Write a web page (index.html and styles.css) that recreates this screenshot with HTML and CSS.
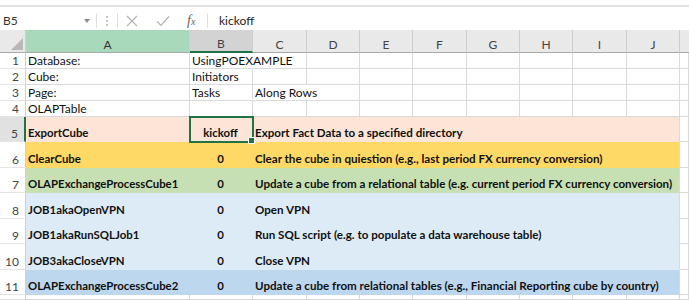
FILE: index.html
```html
<!DOCTYPE html>
<html>
<head>
<meta charset="utf-8">
<link rel="stylesheet" href="styles.css">
</head>
<body>
<div class="fbar">
  <div class="namebox"><span class="ref">B5</span><svg class="dd" width="6" height="4" viewBox="0 0 6 4"><path d="M0 0H6L3 4Z" fill="#8a8a8a"/></svg></div>
  <div class="sep"><i></i><i></i><i></i></div>
  <div class="icons">
    <svg class="ic-x" width="12" height="12" viewBox="0 0 12 12"><path d="M1 1L11 11M11 1L1 11" stroke="#b4b4b4" stroke-width="1.2" fill="none"/></svg>
    <svg class="ic-ok" width="14" height="12" viewBox="0 0 14 12"><path d="M1 6.5L5 10.5L13 1.5" stroke="#b4b4b4" stroke-width="1.2" fill="none"/></svg>
    <span class="fx">f<small>x</small></span>
  </div>
  <div class="formula">kickoff</div>
</div>
<div class="sheet">
  <div class="h corner"><svg width="12" height="12" viewBox="0 0 12 12"><path d="M12 0V12H0Z" fill="#b8b8b8"/></svg></div>
  <div class="h hA">A</div>
  <div class="h hB">B</div>
  <div class="h">C</div>
  <div class="h">D</div>
  <div class="h">E</div>
  <div class="h">F</div>
  <div class="h">G</div>
  <div class="h">H</div>
  <div class="h">I</div>
  <div class="h">J</div>
  <div class="h hx"></div>

  <div class="rn">1</div>
  <div class="c">Database:</div>
  <div class="c span2">UsingPOEXAMPLE</div>
  <div class="c"></div><div class="c"></div><div class="c"></div><div class="c"></div><div class="c"></div><div class="c"></div><div class="c"></div><div class="c"></div>

  <div class="rn">2</div>
  <div class="c">Cube:</div>
  <div class="c">Initiators</div>
  <div class="c"></div><div class="c"></div><div class="c"></div><div class="c"></div><div class="c"></div><div class="c"></div><div class="c"></div><div class="c"></div><div class="c"></div>

  <div class="rn">3</div>
  <div class="c">Page:</div>
  <div class="c">Tasks</div>
  <div class="c span2">Along Rows</div>
  <div class="c"></div><div class="c"></div><div class="c"></div><div class="c"></div><div class="c"></div><div class="c"></div><div class="c"></div>

  <div class="rn">4</div>
  <div class="c">OLAPTable</div>
  <div class="c"></div>
  <div class="c"></div><div class="c"></div><div class="c"></div><div class="c"></div><div class="c"></div><div class="c"></div><div class="c"></div><div class="c"></div><div class="c"></div>

  <div class="rn rn-sel">5</div>
  <div class="c b pink">ExportCube</div>
  <div class="c b pink num sel">kickoff</div>
  <div class="c b pink desc">Export Fact Data to a specified directory</div>
  <div class="c"></div>

  <div class="rn">6</div>
  <div class="c b yellow">ClearCube</div>
  <div class="c b yellow num">0</div>
  <div class="c b yellow desc">Clear the cube in quiestion (e.g., last period FX currency conversion)</div>
  <div class="c"></div>

  <div class="rn">7</div>
  <div class="c b green">OLAPExchangeProcessCube1</div>
  <div class="c b green num">0</div>
  <div class="c b green desc">Update a cube from a relational table (e.g. current period FX currency conversion)</div>
  <div class="c"></div>

  <div class="rn">8</div>
  <div class="c b blue">JOB1akaOpenVPN</div>
  <div class="c b blue num">0</div>
  <div class="c b blue desc">Open VPN</div>
  <div class="c"></div>

  <div class="rn">9</div>
  <div class="c b blue">JOB1akaRunSQLJob1</div>
  <div class="c b blue num">0</div>
  <div class="c b blue desc">Run SQL script (e.g. to populate a data warehouse table)</div>
  <div class="c"></div>

  <div class="rn">10</div>
  <div class="c b blue">JOB3akaCloseVPN</div>
  <div class="c b blue num">0</div>
  <div class="c b blue desc">Close VPN</div>
  <div class="c"></div>

  <div class="rn">11</div>
  <div class="c b blue2">OLAPExchangeProcessCube2</div>
  <div class="c b blue2 num">0</div>
  <div class="c b blue2 desc">Update a cube from relational tables (e.g., Financial Reporting cube by country)</div>
  <div class="c"></div>

  <div class="rn"></div>
  <div class="c"></div><div class="c"></div><div class="c"></div><div class="c"></div><div class="c"></div><div class="c"></div><div class="c"></div><div class="c"></div><div class="c"></div><div class="c"></div><div class="c"></div>
</div>
</body>
</html>
```

FILE: styles.css
```css
* { box-sizing: border-box; }
html, body { margin: 0; padding: 0; }
body {
  width: 689px;
  height: 300px;
  overflow: hidden;
  background: #fff;
  font-family: Lato, "Liberation Sans", sans-serif;
  color: #111;
}

.fbar {
  height: 30px;
  display: flex;
  align-items: stretch;
  padding-top: 8px;
  padding-bottom: 2px;
  border-top: 5px solid #fff;
  background: #fff;
  box-shadow: inset 0 2px 0 #e2e2e2;
}
.namebox {
  width: 97px;
  border-right: 1px solid #e0e0e0;
  display: flex;
  align-items: center;
  justify-content: space-between;
  padding: 0 6px 0 3px;
  font-size: 12px;
  color: #333;
}
.sep {
  width: 20px;
  display: flex;
  flex-direction: column;
  align-items: center;
  justify-content: center;
  gap: 2px;
}
.sep i { width: 2px; height: 2px; background: #c4c4c4; display: block; }
.icons {
  width: 91px;
  border-left: 1px solid #e0e0e0;
  border-right: 1px solid #e0e0e0;
  display: flex;
  align-items: center;
  padding: 0 0 0 8px;
}
.ic-ok { margin-left: 18px; }
.fx {
  margin-left: 17px;
  font-family: "Liberation Serif", serif;
  font-style: italic;
  font-size: 14px;
  color: #666;
}
.fx small { font-size: 10px; }
.formula {
  flex: 1;
  display: flex;
  align-items: center;
  padding-left: 11px;
  font-size: 12px;
  color: #222;
}

.sheet {
  height: 270px;
  display: grid;
  grid-template-columns: 26px 164px 63px 54px 53px 53px 54px 53px 53px 54px 53px 1fr;
  grid-template-rows: 23px repeat(4, 16px) 25px 26px 25px 26px 25px 26px 25px 1fr;
  font-size: 12px;
}
.h {
  background: #e9e9e9;
  border-right: 1px solid #cdcdcd;
  border-bottom: 1px solid #a9a9a9;
  display: flex;
  align-items: center;
  justify-content: center;
  color: #444;
  font-size: 12px;
  padding-top: 6px;
}
.corner { justify-content: flex-end; align-items: flex-end; padding: 0 2px 2px 0; }
.hA { background: #a8d9bb; color: #333; }
.hB { background: #d3d3d3; border-bottom: 2px solid #217346; }
.hx { border-right: none; }

.rn {
  background: #fff;
  border-right: 1px solid #d0d0d0;
  border-bottom: 1px solid #e4e4e4;
  display: flex;
  align-items: flex-end;
  justify-content: flex-end;
  padding: 0 6px 0 0;
  color: #444;
  font-size: 12px;
  line-height: 14px;
}
.rn-sel { background: #e1e1e1; border-right: 2px solid #217346; }

.c {
  border-right: 1px solid #dadada;
  border-bottom: 1px solid #dadada;
  display: flex;
  align-items: flex-end;
  padding: 0 3px 0 2px;
  white-space: nowrap;
  line-height: 14px;
  min-width: 0;
}
.span2 { grid-column: span 2; }
.desc { grid-column: span 8; }
.b { font-weight: 700; font-size: 11.4px; padding-bottom: 1px; }
.b.desc { font-size: 11.6px; }
.num { justify-content: center; }

.pink { background: #fce4d6; border-color: #fce4d6; }
.yellow { background: #ffd966; border-color: #ffd966; }
.green { background: #c6e0b4; border-color: #c6e0b4; }
.blue { background: #ddebf7; border-color: #ddebf7; }
.blue2 { background: #bdd7ee; border-color: #bdd7ee; }
.desc { border-right-color: #dadada; }

.sel {
  position: relative;
  outline: 2px solid #217346;
  outline-offset: -1px;
  z-index: 1;
}
.sel::after {
  content: "";
  position: absolute;
  right: -3px;
  bottom: -3px;
  width: 5px;
  height: 5px;
  background: #217346;
  border: 1px solid #fff;
}
```
